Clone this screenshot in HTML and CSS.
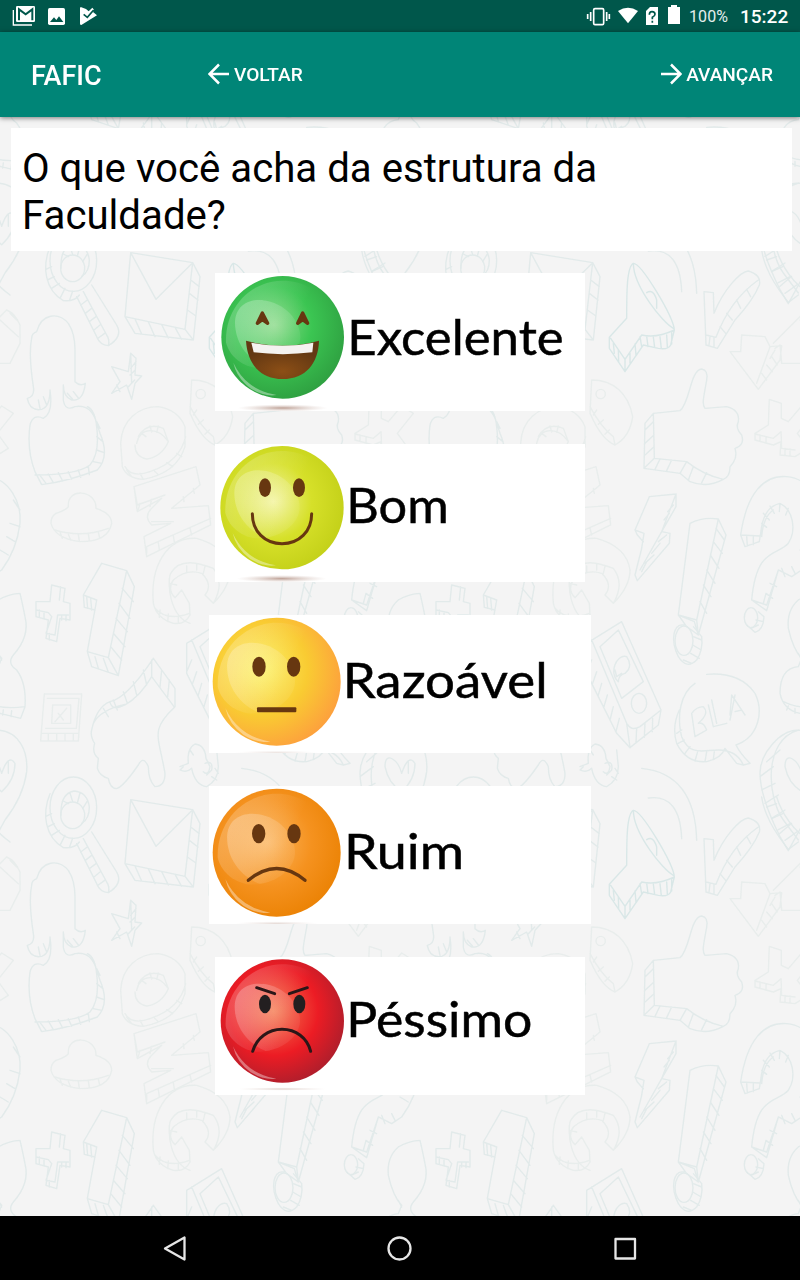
FILE: index.html
```html
<!DOCTYPE html>
<html lang="pt-BR">
<head>
<meta charset="utf-8">
<title>FAFIC</title>
<link rel="stylesheet" href="styles.css">
</head>
<body>
<div class="screen">
  <header class="status">
    <svg class="status-left" width="100" height="32" viewBox="0 0 300 96">
      <path d="M40 30V75H96" fill="none" stroke="#fff" stroke-width="4"/>
      <rect x="48" y="18" width="57" height="48" rx="4" fill="#fff"/>
      <path d="M57 61V28L77 43L97 28V61" fill="none" stroke="#00574b" stroke-width="6"/>
      <rect x="144" y="24" width="51" height="51" rx="5" fill="#fff"/>
      <path d="M150 66L162 52L169 60L177 49L190 66Z" fill="#00574b"/>
      <path d="M242 21L258 27L266 34L277 23L282 29L279 36L291 46L244 75Q240 75 240 71V24Z" fill="#fff"/>
      <path d="M251 43L262 52L281 30" fill="none" stroke="#00574b" stroke-width="5"/>
    </svg>
    <div class="status-right">
      <svg width="96" height="32" viewBox="558 0 288 96">
        <path d="M563 42V57M572 36V63M620 36V63M628 42V57" stroke="#fff" stroke-width="5"/>
        <rect x="581" y="26" width="30" height="48" rx="4" fill="none" stroke="#fff" stroke-width="5"/>
        <path d="M654 33Q684 13 714 33L684 70Z" fill="#fff"/>
        <path d="M750 21H774V75H738V33Z" fill="#fff"/>
        <path d="M748 44Q748 35 756 35Q765 35 765 43Q765 48 757 52V58M757 62V68" fill="none" stroke="#00574b" stroke-width="5"/>
        <path d="M804 21H813V15H831V21H840V72H804Z" fill="#fff"/>
      </svg>
      <span class="battery">100%</span>
      <span class="clock">15:22</span>
    </div>
  </header>
  <nav class="appbar">
    <span class="brand">FAFIC</span>
    <a class="action"><svg width="22" height="22" viewBox="0 0 22 22"><path d="M21 11H2M11 1.5L1.5 11L11 20.500" class="arrow"/></svg>VOLTAR</a>
    <a class="action next"><svg width="22" height="22" viewBox="0 0 22 22"><path d="M1 11H20M11 1.500L20.500 11L11 20.500" class="arrow"/></svg>AVANÇAR</a>
  </nav>
  <main class="content">
    <svg class="wallpaper" width="800" height="1099" viewBox="0 117 800 1099">
      <defs>
        <g id="doodles" class="doodle">
          <g transform="translate(0 240) scale(.33333)">
            <ellipse cx="220" cy="62" rx="70" ry="92"/>
            <ellipse cx="218" cy="85" rx="36" ry="40"/>
            <path d="M183 85Q180 20 222 12Q262 15 268 60Q268 95 245 110M190 42L205 50M210 18L218 44M240 18L232 48M262 42L248 65M150 20C125 80 135 150 190 182Q225 185 238 165M138 88L155 80M142 120L163 110M155 145L178 130M180 175L195 145M208 182L218 154"/>
            <path d="M275 135L350 255Q370 290 325 317Q300 315 290 290L230 170M250 155L320 285Q330 300 325 317M242 195L262 180M256 220L275 205M268 245L288 230M282 270L300 255M295 294L314 280"/>
            <path d="M392 38L578 68L555 268L375 230ZM392 38L468 178L578 68L600 110L580 300L405 280L375 230M405 237L425 282M445 245L465 290M485 254L505 294M525 262L545 298M555 268L580 300M572 120L598 140M568 160L594 180M562 210L588 228"/>
            <path d="M110 275C125 220 175 215 205 250Q225 280 225 330V425Q240 440 256 430Q250 485 215 480Q190 470 190 435V480Q195 515 225 500C285 490 290 555 300 580Q330 650 292 690Q200 725 125 734L105 695Q80 630 90 555Q100 520 130 535Q160 520 150 450Q150 500 125 508Q90 515 82 475Q105 470 100 440Q85 340 95 295Q95 280 110 275M105 705Q230 705 270 675Q300 640 290 560Q285 510 262 500M118 704L138 730M145 702L160 728M175 698L188 723M205 695L215 718M235 690L242 712M265 680L268 704M290 545L300 565M290 590L309 605M290 630L312 638M280 665L305 670M120 505L115 480M140 495L130 470M202 460L218 478M220 455L235 474"/>
            <path d="M392 340L385 395L335 380L360 425L335 460L380 435L395 478L405 430L425 408L405 405L408 355ZM392 340L395 430M408 365L392 385M406 390L390 405M404 420L385 440M350 435L360 455"/>
            <path class="faint" d="M362 610C365 540 415 500 475 500Q535 510 555 560V620Q530 700 430 718Q380 715 367 680ZM410 610C420 560 475 560 505 605Q485 650 440 657Q405 650 405 615M415 590Q440 545 490 565L505 605M425 580L438 590M450 558L455 576M475 558L470 577M375 680Q395 715 450 695Q540 665 557 590M380 690L395 710M420 700L430 718M460 690L475 704M500 668L518 680M530 640L545 650"/>
            <path class="faint" d="M402 740L588 680L600 735L515 805L625 797L632 855L440 950L432 890L512 850L455 855Q430 830 455 805L485 775L412 815ZM402 740L412 795L495 765M440 940L440 920L632 835M455 845L520 845M420 790L415 808M455 778L450 800M550 770L552 785M580 745L583 760M475 908L478 930M520 888L524 912M570 864L575 885"/>
            <path class="faint" d="M168 820Q200 810 205 800C200 740 290 750 288 805Q335 820 335 850Q325 905 240 905Q165 895 153 850Q152 830 168 820M165 870Q245 895 325 865M180 877L187 895M205 883L212 900M235 884L238 904M265 882L268 902M295 876L299 894"/>
          </g>
          <g transform="translate(0 550) scale(.33333)">
            <path d="M155 105L195 115L190 155L210 160V210L180 205L170 275L138 265L145 210L108 200V155H150ZM108 180L145 188L155 200L138 250L165 255L173 195L205 195M118 180V200M132 185V205M182 110L178 150M185 195V210M198 195V212M148 250V270"/>
            <path d="M305 40L380 62L403 110L355 377L275 350L262 305L290 150L250 135ZM262 305L325 323L380 62M250 135L253 172L285 180M260 140L263 175M272 145L275 180M325 323L355 377M285 320L295 355M310 325L325 367M332 290L365 330M340 250L375 290M348 205L382 245M357 160L390 205M367 115L400 155"/>
            <path class="faint" d="M133 432H245L235 573H122ZM142 445H237L229 535H137M124 550H236M158 465H212V520H155ZM165 515L200 475M175 490L190 510M145 552V572M170 552V572M195 552V572M220 552V572"/>
            <path d="M460 325L525 415V470C450 540 475 555 495 670Q495 710 465 710Q445 690 445 650Q430 615 415 645Q370 710 350 716Q330 715 325 685Q300 680 292 655L295 625Q275 610 284 580Q270 560 275 540Q290 470 330 455Q380 445 460 325M330 455Q335 485 375 465Q420 440 455 380L522 470M280 520Q300 480 375 463M310 475L325 500M340 450L352 480M370 425L382 460M400 395L410 435M430 360L440 405M455 330V380M485 360L480 410M508 390L503 440"/>
            <path class="faint" d="M570 220C510 200 500 100 512 70C540 20 600 40 640 55Q675 100 640 160L615 135Q640 105 605 70Q560 55 520 90Q500 120 525 143L545 120L568 160L570 195Q555 225 520 220Q470 205 460 160C450 50 500 -40 590 -35Q680 -10 690 60Q690 110 640 160M465 175Q500 215 568 190M480 180L478 202M505 192L503 215M535 198L535 220M560 48L560 65M590 42L590 60M615 50L610 70M510 100L530 105"/>
          </g>
          <g transform="translate(580 240) scale(.33333)">
            <path class="strong" d="M160 70C185 70 280 230 283 270L272 315Q265 330 235 325L190 315L135 395L88 325V292L140 235C140 160 140 80 160 70M160 70C160 140 250 250 280 265M92 295L135 358L185 285Q230 295 283 270M200 158Q220 145 230 180V205M100 310L103 340M115 330L116 365M135 355V392M150 335L150 370M165 312L168 345M180 290L185 320M200 288L204 320M220 291L224 323M240 290L244 326M260 285L262 320M275 278L275 312"/>
            <path d="M185 -56Q345 -40 350 160M205 33Q300 20 305 155"/>
            <path d="M372 155L400 158L402 220C430 150 480 95 505 93Q545 105 538 135Q520 180 465 240L412 325L378 315ZM378 285L408 292Q450 180 535 120M390 290L387 315M402 292V320M420 260L437 280M440 220L457 240M470 180L482 205M500 148L512 170"/>
            <path class="faint" d="M485 285L555 290L570 320L605 317L600 360L535 448L450 335H482ZM570 320L530 430M585 330L570 355M575 350L592 375M560 375L577 395M545 400L560 420M580 310L680 210Q705 220 720 255V310L690 370H605L600 315L585 325M660 240L715 290M690 220L710 240"/>
            <path d="M545 30Q555 100 625 187L655 165M590 30Q615 110 690 165M560 60L590 50M575 95L608 80M595 128L630 110M615 160L650 135"/>
            <path class="faint" d="M35 420C100 420 145 460 158 530Q150 590 105 615Q65 600 30 520ZM30 500Q65 565 100 590L105 615M40 525L50 510M55 553L70 540M75 583L88 570"/><circle class="faint" cx="62" cy="462" r="14"/>
            <path d="M220 520L300 512C330 490 330 390 365 387Q385 390 380 420C370 480 365 490 375 505L440 500Q480 510 475 545Q465 565 485 585Q495 615 465 625Q475 655 450 680Q450 710 430 718Q380 745 330 725L300 700L192 685L195 550ZM220 520L223 655L320 665Q370 705 430 718M223 655L192 685M195 570L220 545M195 610L222 585M195 645L222 620M225 688L240 657M260 692L275 660M300 700L320 665M325 720L340 680M365 728L380 698"/>
            <path class="faint" d="M568 478L604 490V535L625 545L665 498L700 520L652 580L685 625L645 650L600 645L603 605L580 615L525 600V580L565 555ZM525 582L580 595L603 575L605 625L645 630M540 585V603M558 590V610M615 625V645M630 627V648"/>
            <path d="M208 770L288 762V800L245 875L270 880L268 910L172 1022L165 1005L185 925L192 880L165 870ZM165 870L172 885L190 905M288 762L245 875L180 990M280 795L263 815M268 820L252 840M260 885L235 905M240 910L215 940M222 945L195 970M200 965L185 995"/>
            <path d="M330 850Q370 830 415 837L438 885L355 1185L343 1145L295 1125ZM415 837L350 1140M408 865L433 900M400 905L427 940M391 945L417 985M380 990L405 1030M370 1035L393 1070M360 1085L380 1120M295 1125L350 1140L355 1185L320 1160ZM312 1155C280 1150 270 1200 295 1250Q320 1290 350 1260Q370 1230 365 1190L340 1160M310 1260L335 1270M332 1240L358 1255M338 1215L364 1230M340 1190L365 1200"/><ellipse cx="312" cy="1202" rx="27" ry="44"/>
            <path d="M482 885C500 760 550 705 620 710C690 715 725 790 720 850Q710 930 665 990L635 1010L595 990L560 1112L515 1080C530 920 590 950 625 910C650 870 640 810 600 790Q555 800 545 860L538 905L495 920ZM482 885L540 888M500 888L502 918M520 888V914M545 850L560 862M550 820L568 840M570 798L583 820M600 790L598 815M625 805L617 825M515 1080L560 1095L595 990M700 780L720 810M690 850L720 860M680 890L705 905M660 930L685 945M550 1090L558 1060L578 1075M570 1030L590 1040M605 985L615 1010M635 980L645 1000M580 810Q550 830 545 890"/>
            <ellipse cx="513" cy="1133" rx="20" ry="30"/><path d="M500 1155L525 1177Q550 1170 552 1130L535 1115M513 1165L535 1155M528 1140L550 1145"/>
          </g>
          <g transform="translate(580 550) scale(.33333)">
            <path d="M125 215L243 480L235 525L150 593L110 550L20 370V280ZM35 270L140 520Q155 545 180 530L243 480M60 290L115 240L190 395L125 445ZM140 520L150 593M35 330L20 365M50 365L38 400M65 400L55 435M82 435L72 470M100 470L90 510M118 505L108 545M170 535L168 578M195 520L193 562M218 505L217 545M115 395C85 370 110 310 140 320Q160 350 135 370Q115 375 115 395M105 360L110 380L125 370"/><ellipse cx="177" cy="460" rx="23" ry="30"/>
            <path d="M345 400C300 430 290 500 305 560C330 620 370 600 415 600Q470 600 490 645L510 640Q480 610 468 585C540 560 550 480 525 430Q480 365 380 373M298 480Q275 530 290 580Q320 640 380 635Q425 625 435 595L470 640L490 645M290 550L305 540M295 580L313 570M315 610L330 590M345 633L353 605M375 635L380 605M400 627L403 605M335 490L345 560L380 540Q370 515 355 520Q390 490 370 470Q350 470 335 490M385 465L400 530L440 520M395 450L410 520M450 495L455 435L495 495M465 435L450 510M465 485L485 480"/>
            <path d="M10 650L0 660Q20 670 35 655Q45 705 80 710Q115 690 115 650L110 600M0 650L25 640Q20 595 45 582Q75 585 78 625L90 650Q85 680 70 665M30 600L40 615M75 640Q100 630 95 660L80 675M95 680L110 690M105 655L115 670"/>
            <path d="M540 670C540 610 600 540 655 540C715 545 745 600 740 665Q730 740 675 810L625 902L600 860Q540 740 540 670M655 540C550 570 560 740 610 810L655 870M540 680L580 650M545 720L585 700M555 760L595 735M575 805L615 780M600 850L635 820M560 635L600 600M615 650C615 600 655 630 665 670Q685 610 705 640Q705 690 665 725Q625 700 615 650M685 635V670"/>
            <path d="M655 150Q620 180 625 235Q640 300 665 325L655 350Q600 355 600 430Q610 480 660 490L722 505L735 470Q740 400 710 360Q680 340 700 315Q750 260 735 200Q725 150 720 130Q690 130 655 150M610 455Q660 480 735 470M625 468L620 480M645 475V490M670 480L668 495M695 482L693 500M655 310L665 330"/>
          </g>
        </g>
      </defs>
      <use href="#doodles" x="-800" y="-547"/><use href="#doodles" x="-400" y="-547"/><use href="#doodles" y="-547"/><use href="#doodles" x="400" y="-547"/>
      <use href="#doodles" x="-800"/><use href="#doodles" x="-400"/><use href="#doodles"/><use href="#doodles" x="400"/>
      <use href="#doodles" x="-800" y="547"/><use href="#doodles" x="-400" y="547"/><use href="#doodles" y="547"/><use href="#doodles" x="400" y="547"/>
    </svg>
    <h1 class="question">O que você acha da estrutura da Faculdade?</h1>
    <div class="options">
      <svg class="option" width="370" height="138" viewBox="30 24 1110 414">
        <defs>
          <radialGradient id="green" cx=".43" cy=".4" r=".62"><stop offset="0" stop-color="#8ada88"/><stop offset=".5" stop-color="#3bc552"/><stop offset="1" stop-color="#2fa141"/></radialGradient>
          <radialGradient id="lime" cx=".43" cy=".45" r=".62"><stop offset="0" stop-color="#f2f39b"/><stop offset=".5" stop-color="#d6e029"/><stop offset="1" stop-color="#c2cf17"/></radialGradient>
          <radialGradient id="yellow" cx=".38" cy=".4" r=".66"><stop offset="0" stop-color="#fbf15d"/><stop offset=".55" stop-color="#f9cb32"/><stop offset="1" stop-color="#fda03d"/></radialGradient>
          <radialGradient id="orange" cx=".43" cy=".42" r=".62"><stop offset="0" stop-color="#fbb45c"/><stop offset=".55" stop-color="#f5921f"/><stop offset="1" stop-color="#eb8204"/></radialGradient>
          <radialGradient id="red" cx=".43" cy=".42" r=".62"><stop offset="0" stop-color="#f57a50"/><stop offset=".58" stop-color="#ec1c24"/><stop offset="1" stop-color="#ad1e2c"/></radialGradient>
          <radialGradient id="mouth" cx=".5" cy=".8" r=".6"><stop offset="0" stop-color="#8c4f16"/><stop offset="1" stop-color="#633813"/></radialGradient>
          <radialGradient id="shade"><stop offset="0" stop-color="#9a6d5c" stop-opacity=".65"/><stop offset="1" stop-color="#c8b1a8" stop-opacity="0"/></radialGradient>
          <linearGradient id="sheen" x1="0" y1=".3" x2="1" y2=".7"><stop offset="0" stop-color="#fff" stop-opacity=".24"/><stop offset=".65" stop-color="#fff" stop-opacity="0"/></linearGradient>
          <linearGradient id="sheen2" x1=".1" y1=".1" x2="1" y2=".7"><stop offset="0" stop-color="#fff" stop-opacity=".25"/><stop offset="1" stop-color="#fff" stop-opacity=".06"/></linearGradient>
          <g id="gloss">
            <path d="M-170 15C-174 -90 -95 -170 0 -170C60 -170 110 -140 140 -90C100 20 30 95 -80 92C-130 85 -162 50 -170 15Z" fill="url(#sheen)"/>
            <path d="M-143 -45C-142 -88 -112 -112 -70 -112C5 -110 53 -50 53 0C52 42 8 82 -50 90C-108 66 -143 15 -143 -45Z" fill="url(#sheen2)"/>
            <path d="M-148 76Q-110 158 -18 173Q-55 179 -95 154Q-138 123 -148 76Z" fill="#fff" opacity=".38"/>
          </g>
        </defs>
        <ellipse cx="233" cy="429" rx="135" ry="11" fill="url(#shade)"/>
        <circle cx="233" cy="217" r="184" fill="url(#green)"/>
        <use href="#gloss" x="233" y="217"/>
        <path d="M157 175L172 144L188 175L172 164ZM278 175L293 144L308 175L293 164Z" fill="#673710" stroke="#673710" stroke-width="10" stroke-linejoin="round"/>
        <path d="M123 227Q233 257 342 227C340 295 302 342 233 342C165 342 127 295 123 227Z" fill="url(#mouth)"/>
        <path d="M139 233Q233 252 325 233L322 262Q233 273 146 262Z" fill="#f4f2f0"/>
        <text class="label" x="427" y="270" textLength="649" lengthAdjust="spacingAndGlyphs">Excelente</text>
      </svg>
      <svg class="option" width="370" height="138" viewBox="30 27 1110 414">
        <ellipse cx="230" cy="431" rx="135" ry="11" fill="url(#shade)"/>
        <circle cx="231" cy="218" r="185" fill="url(#lime)"/>
        <use href="#gloss" x="231" y="218"/>
        <ellipse cx="180" cy="158" rx="18" ry="28" fill="#673710"/><ellipse cx="282" cy="158" rx="18" ry="28" fill="#673710"/>
        <path d="M142 236C142 290 180 326 231 326C282 326 320 290 320 236" class="line"/>
        <text class="label" x="424" y="263" textLength="307" lengthAdjust="spacingAndGlyphs">Bom</text>
      </svg>
      <svg class="option" width="382" height="138" viewBox="12 30 1146 414">
        <ellipse cx="215" cy="442" rx="125" ry="5" fill="url(#shade)" opacity=".3"/>
        <circle cx="215" cy="230" r="192" fill="url(#yellow)"/>
        <use href="#gloss" transform="translate(215 230) scale(1.04)"/>
        <ellipse cx="162" cy="185" rx="20" ry="30" fill="#673710"/><ellipse cx="266" cy="185" rx="20" ry="30" fill="#673710"/>
        <rect x="156" y="307" width="118" height="15" rx="3" fill="#673710"/>
        <text class="label" x="413" y="278" textLength="615" lengthAdjust="spacingAndGlyphs">Razoável</text>
      </svg>
      <svg class="option" width="382" height="138" viewBox="12 18 1146 414">
        <ellipse cx="215" cy="430" rx="125" ry="6" fill="url(#shade)" opacity=".4"/>
        <circle cx="215" cy="218" r="192" fill="url(#orange)"/>
        <use href="#gloss" transform="translate(215 218) scale(1.04)"/>
        <ellipse cx="161" cy="161" rx="20" ry="29" fill="#673710"/><ellipse cx="267" cy="161" rx="20" ry="29" fill="#673710"/>
        <path d="M130 301Q215 230 300 301" class="line wide"/>
        <text class="label" x="417" y="266" textLength="360" lengthAdjust="spacingAndGlyphs">Ruim</text>
      </svg>
      <svg class="option" width="370" height="138" viewBox="30 21 1110 414">
        <ellipse cx="232" cy="417" rx="135" ry="5" fill="url(#shade)" opacity=".5"/>
        <circle cx="232" cy="213" r="185" fill="url(#red)"/>
        <use href="#gloss" x="232" y="213"/>
        <ellipse cx="180" cy="162" rx="18" ry="28" fill="#231f20"/><ellipse cx="283" cy="162" rx="18" ry="28" fill="#231f20"/>
        <path d="M155 113L209 131M253 131L307 113" class="line dark"/>
        <path d="M143 304C155 263 190 238 231 238C272 238 307 263 317 304" class="line dark"/>
        <text class="label" x="424" y="260" textLength="558" lengthAdjust="spacingAndGlyphs">Péssimo</text>
      </svg>
    </div>
  </main>
  <footer class="navbar">
    <svg width="24" height="28" viewBox="0 0 24 28"><path d="M21.500 3.500V25.500L2 14.500Z" class="key"/></svg>
    <svg width="26" height="28" viewBox="0 0 26 28"><circle cx="12.500" cy="14.500" r="11" class="key"/></svg>
    <svg width="24" height="28" viewBox="0 0 24 28"><rect x="2.500" y="5" width="19.500" height="19.500" class="key"/></svg>
  </footer>
</div>
</body>
</html>
```
FILE: styles.css
```css
* { box-sizing: border-box; }
body { margin: 0; font-family: Roboto, "Noto Sans", sans-serif; }
svg { display: block; flex: none; }
.screen { width: 800px; height: 1280px; display: flex; flex-direction: column; overflow: hidden; background: #f4f4f4; }
.status { height: 32px; flex: none; display: flex; justify-content: space-between; background: #00574b; color: #fff; }
.status-right { display: flex; align-items: center; padding-right: 11px; }
.battery { font-size: 16px; line-height: 32px; margin-left: 7px; width: 51px; padding-top: 1px; color: #e5eeed; letter-spacing: .1px; }
.clock { font-size: 19px; font-weight: 500; line-height: 32px; width: 49px; padding-top: 1px; white-space: nowrap; }
.appbar { height: 85px; flex: none; display: flex; align-items: center; padding: 0 27px 0 31px; background: #008577; color: #fff; font-weight: 500; box-shadow: 0 1px 5px rgba(0, 0, 0, .5); position: relative; z-index: 1; }
.brand { font-size: 27px; width: 177px; padding-top: 2px; }
.action { display: flex; align-items: center; gap: 4px; font-size: 19.1px; }
.action svg { margin-top: -2px; }
.next { margin-left: auto; }
.arrow { fill: none; stroke: #fff; stroke-width: 2.5; }
.content { flex: 1; min-height: 0; position: relative; padding: 11px 8px 0 11px; }
.wallpaper { position: absolute; left: 0; top: 0; }
.doodle { fill: none; stroke: #e0e9e9; stroke-width: 4.2; stroke-linejoin: round; stroke-linecap: round; opacity: .9; }
.faint { stroke: #e7eceb; }
.strong { stroke: #d6e6e6; }
.question { position: relative; margin: 0; height: 123px; padding: 17px 11px 0; background: #fff; color: #000; font-size: 40.2px; font-weight: 400; line-height: 47px; }
.options { position: relative; display: flex; flex-direction: column; align-items: center; gap: 33px; padding-top: 22px; margin-left: -3px; }
.option { background: #fff; }
.label { font-family: Lato, "Open Sans", sans-serif; font-size: 146px; fill: #000; stroke: #000; stroke-width: 1.5; }
.line { fill: none; stroke: #673710; stroke-width: 9; stroke-linecap: round; }
.wide { stroke-width: 10; }
.dark { stroke: #2b1718; }
.navbar { height: 64px; flex: none; display: flex; align-items: center; justify-content: space-between; padding: 0 163px 0 163px; background: #000; }
.key { fill: none; stroke: #e6e6e6; stroke-width: 2.3; stroke-linejoin: round; }
```
